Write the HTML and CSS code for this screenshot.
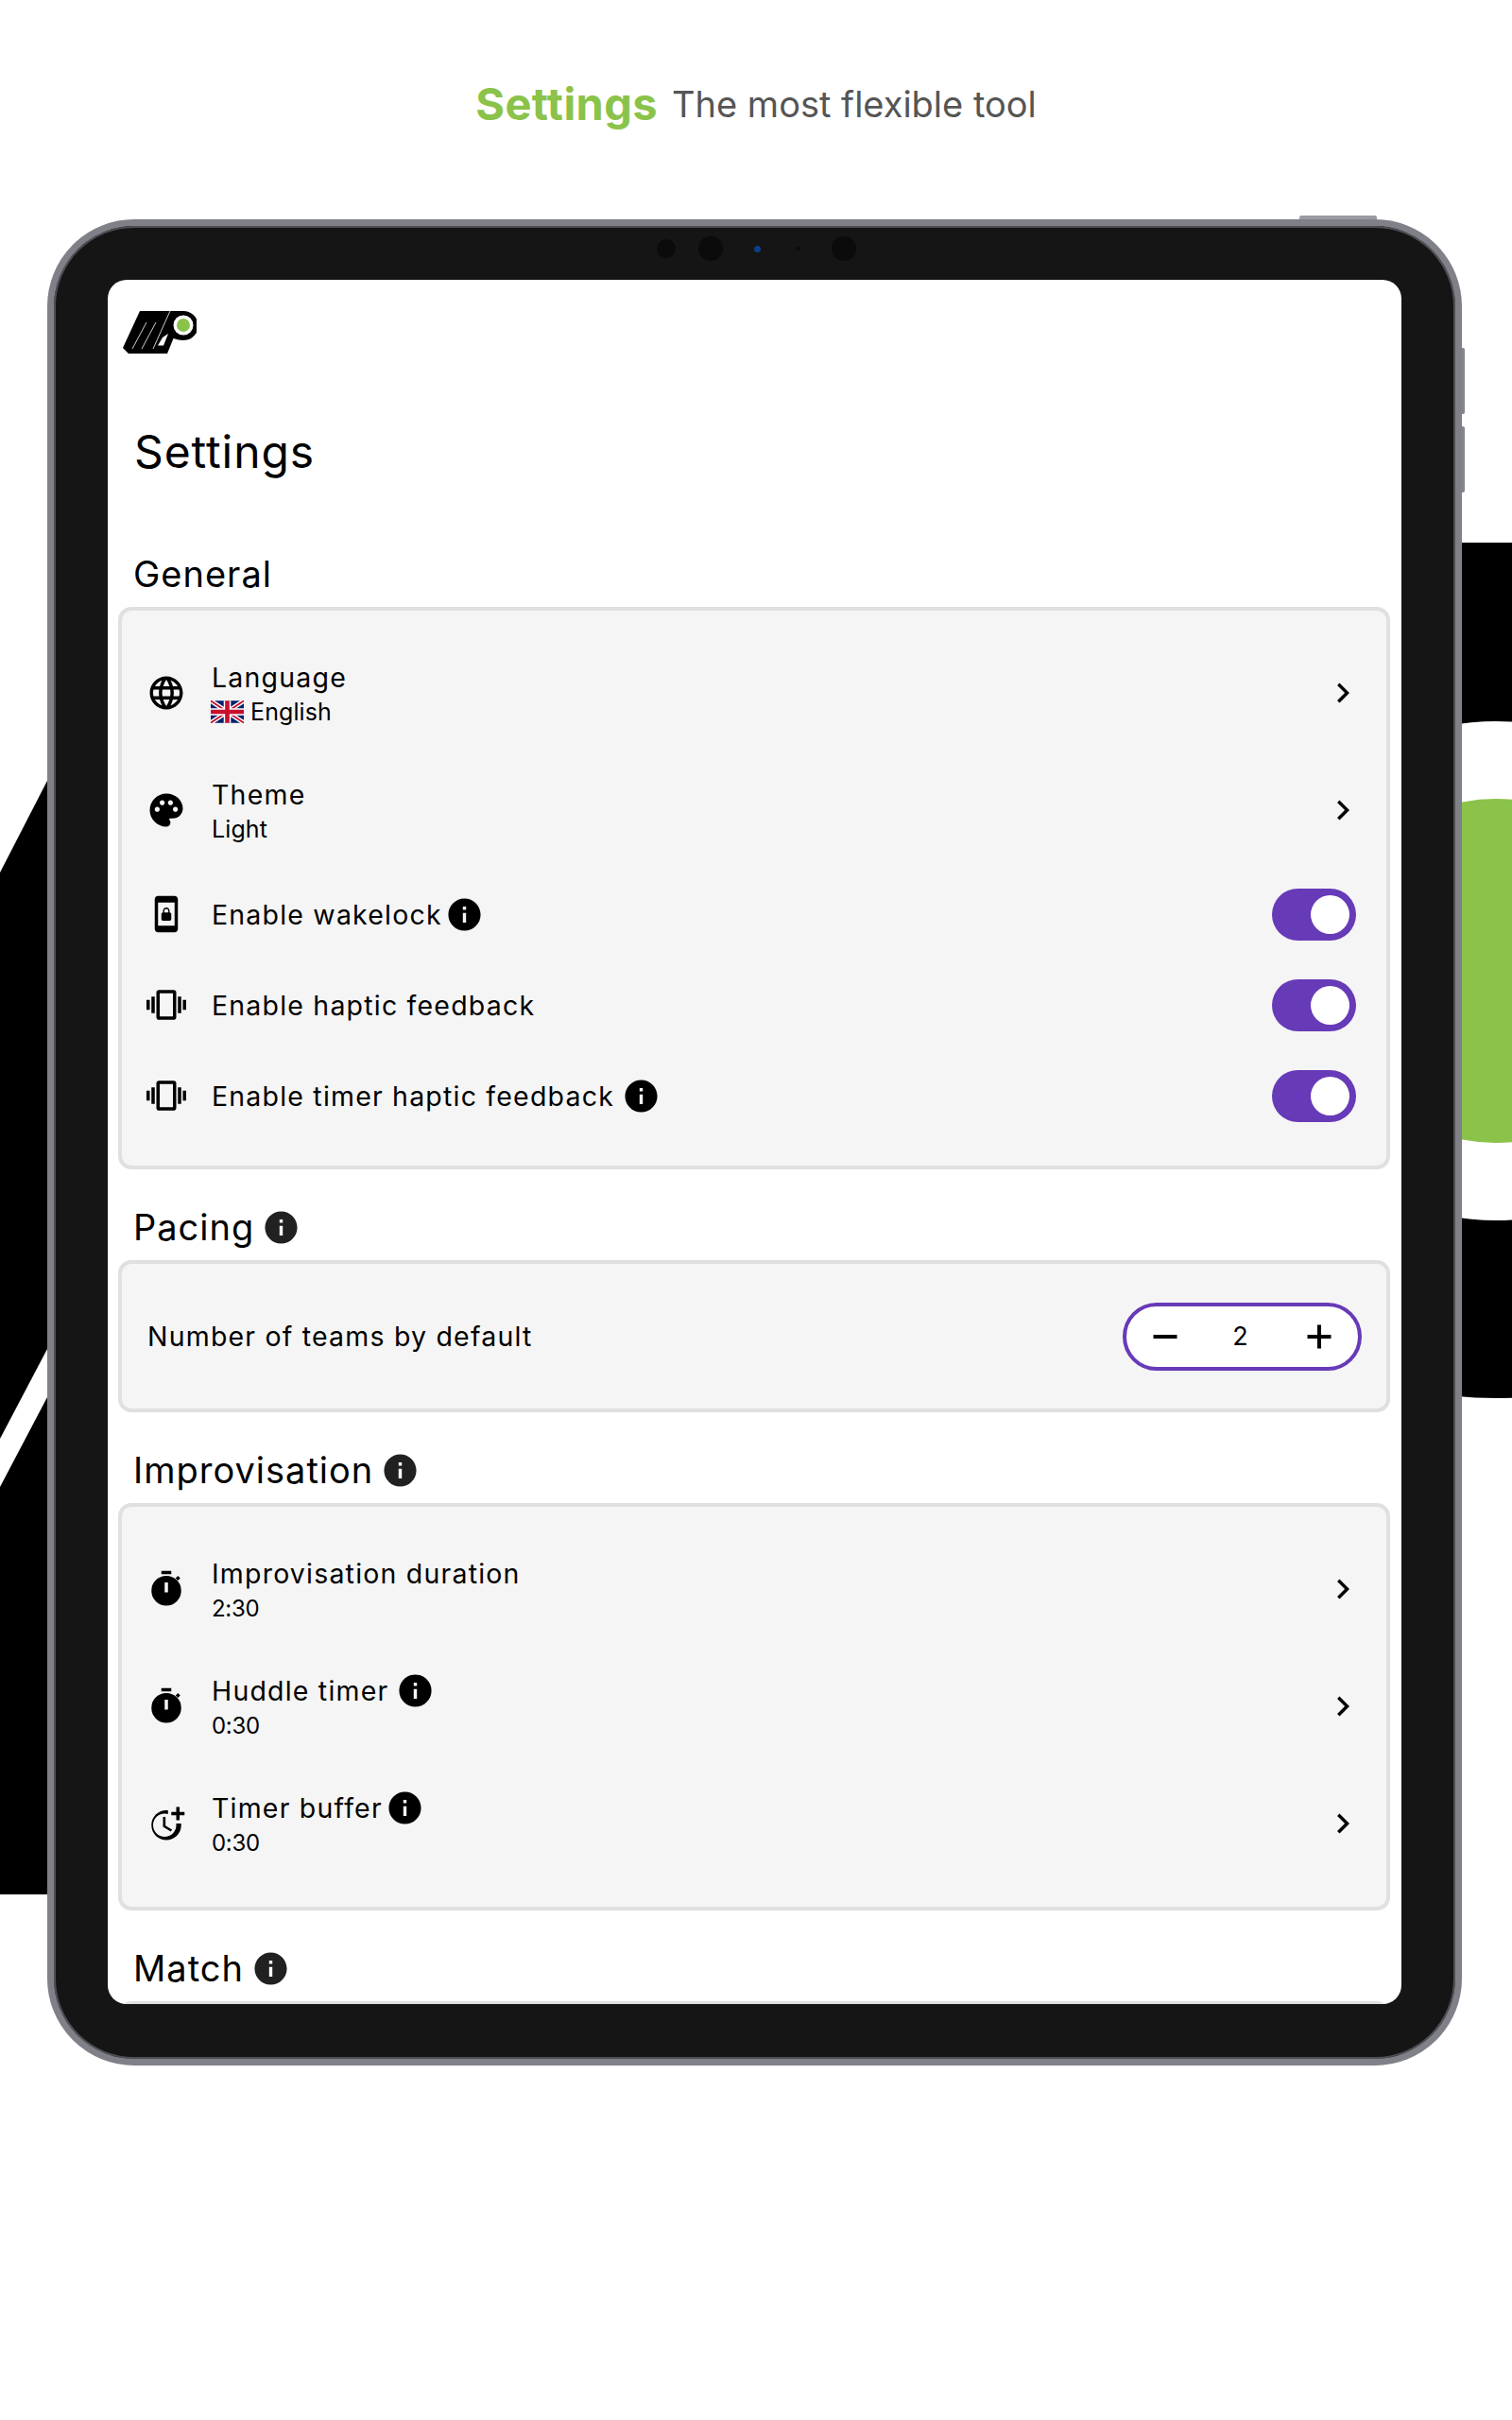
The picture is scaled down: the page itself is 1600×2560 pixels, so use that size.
FILE: index.html
```html
<!DOCTYPE html>
<html lang="en">
<head>
    <meta charset="UTF-8">
    <meta name="viewport" content="width=device-width, initial-scale=1.0">
    <title>Settings</title>
    <link rel="stylesheet" href="styles.css">
</head>
<body>

    <!-- Big logo behind the tablet -->
    <svg class="backdrop" width="1600" height="2560" viewBox="0 0 1600 2560">
        <polygon points="0,923 120,690 120,2004 0,2004" fill="#000"/>
        <polygon points="0,1522 120,1294 120,1345 0,1573" fill="#fff"/>
        <rect x="1500" y="574" width="100" height="453" fill="#000"/>
        <circle cx="1583" cy="1027" r="452" fill="#000"/>
        <circle cx="1583" cy="1027" r="264" fill="#fff"/>
        <circle cx="1583" cy="1027" r="182" fill="#8bc34a"/>
    </svg>

    <svg width="0" height="0" class="defs">
        <defs>
            <symbol id="i-info" viewBox="0 0 24 24"><path d="M12 2C6.48 2 2 6.48 2 12s4.48 10 10 10 10-4.48 10-10S17.52 2 12 2zm1 15h-2v-6h2v6zm0-8h-2V7h2v2z"/></symbol>
            <symbol id="i-chevron" viewBox="0 0 24 24"><path d="M10 6L8.59 7.41 13.17 12l-4.58 4.59L10 18l6-6z"/></symbol>
            <symbol id="i-globe" viewBox="0 0 24 24"><path d="M11.99 2C6.47 2 2 6.48 2 12s4.47 10 9.99 10C17.52 22 22 17.52 22 12S17.52 2 11.99 2zm6.93 6h-2.95c-.32-1.25-.78-2.45-1.38-3.56 1.84.63 3.37 1.91 4.33 3.56zM12 4.04c.83 1.2 1.48 2.53 1.91 3.96h-3.82c.43-1.43 1.08-2.76 1.91-3.96zM4.26 14C4.1 13.36 4 12.69 4 12s.1-1.36.26-2h3.38c-.08.66-.14 1.32-.14 2 0 .68.06 1.34.14 2H4.26zm.82 2h2.95c.32 1.25.78 2.45 1.38 3.56-1.84-.63-3.37-1.9-4.33-3.56zm2.95-8H5.08c.96-1.66 2.49-2.93 4.33-3.56C8.81 5.55 8.35 6.75 8.03 8zM12 19.96c-.83-1.2-1.48-2.53-1.91-3.96h3.82c-.43 1.43-1.08 2.76-1.91 3.96zM14.34 14H9.66c-.09-.66-.16-1.32-.16-2 0-.68.07-1.35.16-2h4.68c.09.65.16 1.32.16 2 0 .68-.07 1.34-.16 2zm.25 5.56c.6-1.11 1.06-2.31 1.38-3.56h2.95c-.96 1.65-2.49 2.93-4.33 3.56zM16.36 14c.08-.66.14-1.32.14-2 0-.68-.06-1.34-.14-2h3.38c.16.64.26 1.31.26 2s-.1 1.36-.26 2h-3.38z"/></symbol>
            <symbol id="i-palette" viewBox="0 0 24 24"><path d="M12 2C6.49 2 2 6.49 2 12s4.49 10 10 10c1.38 0 2.5-1.12 2.5-2.5 0-.61-.23-1.2-.64-1.67-.08-.1-.13-.21-.13-.33 0-.28.22-.5.5-.5H16c3.31 0 6-2.69 6-6 0-4.96-4.49-9-10-9zm5.5 11c-.83 0-1.5-.67-1.5-1.5s.67-1.5 1.5-1.5 1.5.67 1.5 1.5-.67 1.5-1.5 1.5zm-3-4c-.83 0-1.5-.67-1.5-1.5S13.67 6 14.5 6s1.5.67 1.5 1.5S15.33 9 14.5 9zM5 11.5c0-.83.67-1.5 1.5-1.5s1.5.67 1.5 1.5S7.33 13 6.5 13 5 12.33 5 11.5zm6-4c0 .83-.67 1.5-1.5 1.5S8 8.33 8 7.5 8.67 6 9.5 6s1.5.67 1.5 1.5z"/></symbol>
            <symbol id="i-lock" viewBox="0 0 24 24"><path d="M10 16h4c.55 0 1-.45 1-1v-3c0-.55-.45-1-1-1v-1c0-1.11-.9-2-2-2-1.11 0-2 .9-2 2v1c-.55 0-1 .45-1 1v3c0 .55.45 1 1 1zm.8-6c0-.66.54-1.2 1.2-1.2s1.2.54 1.2 1.2v1h-2.4v-1zM17 1H7c-1.1 0-2 .9-2 2v18c0 1.1.9 2 2 2h10c1.1 0 2-.9 2-2V3c0-1.1-.9-2-2-2zm0 18H7V5h10v14z"/></symbol>
            <symbol id="i-vibration" viewBox="0 0 24 24"><path d="M0 15h2V9H0v6zm3 2h2V7H3v10zm19-8v6h2V9h-2zm-3 8h2V7h-2v10zM16.5 3h-9C6.67 3 6 3.67 6 4.5v15c0 .83.67 1.5 1.5 1.5h9c.83 0 1.5-.67 1.5-1.5v-15c0-.83-.67-1.5-1.5-1.5zM16 19H8V5h8v14z"/></symbol>
            <symbol id="i-timer" viewBox="0 0 24 24"><path d="M9 1h6v2H9zM17.6 5.4l1.42-1.42 1.41 1.41-1.42 1.42z"/><path fill-rule="evenodd" d="M12 4a9 9 0 1 0 0 18 9 9 0 0 0 0-18zM11 8h2v6h-2z"/></symbol>
            <symbol id="i-more-time" viewBox="0 0 24 24"><path d="M10 8v6l4.7 2.9.8-1.2-4-2.4V8zM17.92 12c.05.33.08.66.08 1 0 3.9-3.1 7-7 7s-7-3.1-7-7 3.1-7 7-7c.7 0 1.37.1 2 .29V4.23C13.36 4.08 12.69 4 12 4c-5 0-9 4-9 9s4 9 9 9 9-4 9-9c0-.34-.02-.67-.06-1h-3.02zM20 5V2h-2v3h-3v2h3v3h2V7h3V5z"/></symbol>
        </defs>
    </svg>

    <h2 class="headline"><b>Settings</b> <span>The most flexible tool</span></h2>

    <div class="tablet">
        <i class="btn-top"></i>
        <i class="btn-side btn-side-1"></i>
        <i class="btn-side btn-side-2"></i>

        <div class="cameras">
            <i class="cam cam-a"></i>
            <i class="cam cam-b"></i>
            <i class="cam cam-blue"></i>
            <i class="cam cam-dot"></i>
            <i class="cam cam-c"></i>
        </div>

        <div class="screen">
            <svg class="logo" width="78" height="46" viewBox="10 8 78 46">
                <path d="M28 8H74a15.5 15.5 0 0 1 4 30.5c-4 1-9 .5-14.5-1.5L57 53H16l-6-6z" fill="#000"/>
                <circle cx="74" cy="23" r="10.5" fill="#fff"/>
                <circle cx="74" cy="23" r="7" fill="#8bc34a"/>
                <path d="M35 20L20 48M45 20L30 48M60 8L42 48" stroke="#fff" stroke-width=".8" fill="none"/>
                <path d="M58 32L53 44.5 47 44.5 52 36z" fill="#fff"/>
            </svg>

            <h1 class="page-title">Settings</h1>

            <h3 class="section-title section-first">General</h3>
            <div class="card">
                <div class="row row-double">
                    <svg class="row-icon"><use href="#i-globe"/></svg>
                    <div class="row-text">
                        <div class="row-title">Language</div>
                        <div class="row-sub">
                            <svg class="flag" width="35" height="24" viewBox="0 0 60 40">
                                <rect width="60" height="40" rx="4" fill="#012169"/>
                                <path d="M0 0L60 40M60 0L0 40" stroke="#fff" stroke-width="8"/>
                                <path d="M0 0L60 40M60 0L0 40" stroke="#c8102e" stroke-width="3"/>
                                <path d="M30 0V40M0 20H60" stroke="#fff" stroke-width="13"/>
                                <path d="M30 0V40M0 20H60" stroke="#c8102e" stroke-width="8"/>
                            </svg>
                            English
                        </div>
                    </div>
                    <svg class="chevron"><use href="#i-chevron"/></svg>
                </div>
                <div class="row row-double">
                    <svg class="row-icon"><use href="#i-palette"/></svg>
                    <div class="row-text">
                        <div class="row-title">Theme</div>
                        <div class="row-sub">Light</div>
                    </div>
                    <svg class="chevron"><use href="#i-chevron"/></svg>
                </div>
                <div class="row">
                    <svg class="row-icon"><use href="#i-lock"/></svg>
                    <div class="row-text">
                        <div class="row-title">Enable wakelock <svg class="info info-tight"><use href="#i-info"/></svg></div>
                    </div>
                    <div class="toggle"><i class="knob"></i></div>
                </div>
                <div class="row">
                    <svg class="row-icon"><use href="#i-vibration"/></svg>
                    <div class="row-text">
                        <div class="row-title">Enable haptic feedback</div>
                    </div>
                    <div class="toggle"><i class="knob"></i></div>
                </div>
                <div class="row">
                    <svg class="row-icon"><use href="#i-vibration"/></svg>
                    <div class="row-text">
                        <div class="row-title">Enable timer haptic feedback <svg class="info"><use href="#i-info"/></svg></div>
                    </div>
                    <div class="toggle"><i class="knob"></i></div>
                </div>
            </div>

            <h3 class="section-title">Pacing <svg class="info info-head"><use href="#i-info"/></svg></h3>
            <div class="card card-stepper">
                <div class="row-title">Number of teams by default</div>
                <div class="stepper">
                    <svg width="36" height="36" viewBox="0 0 36 36"><path d="M5.5 18h25" stroke="#000" stroke-width="4"/></svg>
                    <span class="stepper-value">2</span>
                    <svg width="36" height="36" viewBox="0 0 36 36"><path d="M5.5 18h25M18 5.5v25" stroke="#000" stroke-width="4"/></svg>
                </div>
            </div>

            <h3 class="section-title">Improvisation <svg class="info info-head"><use href="#i-info"/></svg></h3>
            <div class="card">
                <div class="row row-double">
                    <svg class="row-icon"><use href="#i-timer"/></svg>
                    <div class="row-text">
                        <div class="row-title">Improvisation duration</div>
                        <div class="row-sub row-sub-time">2:30</div>
                    </div>
                    <svg class="chevron"><use href="#i-chevron"/></svg>
                </div>
                <div class="row row-double">
                    <svg class="row-icon"><use href="#i-timer"/></svg>
                    <div class="row-text">
                        <div class="row-title">Huddle timer <svg class="info"><use href="#i-info"/></svg></div>
                        <div class="row-sub row-sub-time">0:30</div>
                    </div>
                    <svg class="chevron"><use href="#i-chevron"/></svg>
                </div>
                <div class="row row-double">
                    <svg class="row-icon"><use href="#i-more-time"/></svg>
                    <div class="row-text">
                        <div class="row-title">Timer buffer <svg class="info info-tight"><use href="#i-info"/></svg></div>
                        <div class="row-sub row-sub-time">0:30</div>
                    </div>
                    <svg class="chevron"><use href="#i-chevron"/></svg>
                </div>
            </div>

            <h3 class="section-title">Match <svg class="info info-head"><use href="#i-info"/></svg></h3>
            <div class="card card-cut"></div>
        </div>
    </div>

</body>
</html>
```

FILE: styles.css
```css
* {
    box-sizing: border-box;
}

body {
    margin: 0;
    height: 2560px;
    position: relative;
    overflow: hidden;
    background-color: #ffffff;
    color: #000000;
    font-family: Inter, "Noto Sans", sans-serif;
}

.backdrop {
    position: absolute;
    top: 0;
    left: 0;
}

.defs {
    position: absolute;
}

/* Heading above the tablet */
.headline {
    position: relative;
    display: flex;
    justify-content: center;
    align-items: center;
    gap: 15px;
    height: 60px;
    margin: 80px 0 92px;
    line-height: 60px;
    font-weight: 400;
}

.headline b {
    font-size: 47px;
    letter-spacing: 0.4px;
    font-weight: 700;
    color: #8bc34a;
}

.headline span {
    font-size: 38px;
    color: #555555;
}

/* Tablet frame */
.tablet {
    position: relative;
    width: 1497px;
    margin-left: 50px;
    padding: 57px 57px 58px;
    background-color: #151515;
    border: 7px solid #808188;
    border-radius: 92px;
    box-shadow: inset 0 0 0 2px #4e4f54;
}

.btn-top {
    position: absolute;
    top: -11px;
    right: 83px;
    width: 82px;
    height: 4px;
    background-color: #9a9ba2;
    border-radius: 2px 2px 0 0;
}

.btn-side {
    position: absolute;
    right: -10px;
    width: 3px;
    height: 70px;
    background-color: #85868d;
    border-radius: 0 2px 2px 0;
}

.btn-side-1 {
    top: 129px;
}

.btn-side-2 {
    top: 212px;
}

.cameras {
    position: absolute;
    top: 0;
    left: 0;
    right: 0;
    height: 48px;
}

.cam {
    position: absolute;
    border-radius: 50%;
    background-color: #0b0b0b;
}

.cam-a {
    left: 638px;
    top: 14px;
    width: 20px;
    height: 20px;
}

.cam-b {
    left: 682px;
    top: 11px;
    width: 26px;
    height: 26px;
}

.cam-blue {
    left: 741px;
    top: 21px;
    width: 7px;
    height: 7px;
    background-color: #0d3f86;
}

.cam-dot {
    left: 786px;
    top: 22px;
    width: 4px;
    height: 4px;
}

.cam-c {
    left: 823px;
    top: 11px;
    width: 26px;
    height: 26px;
}

.screen {
    width: 1369px;
    height: 1824px;
    padding: 33px 12px 0 11px;
    background-color: #ffffff;
    border-radius: 20px;
    overflow: hidden;
}

.logo {
    display: block;
    margin-left: 5px;
}

.page-title {
    margin: 73px 0 0;
    padding-left: 17px;
    height: 60px;
    font-size: 48px;
    letter-spacing: 0.9px;
    line-height: 60px;
    font-weight: 400;
}

.section-title {
    display: flex;
    align-items: center;
    margin: 41px 0 15px;
    padding-left: 16px;
    height: 40px;
    font-size: 38px;
    letter-spacing: 1px;
    line-height: 43px;
    font-weight: 400;
}

.section-first {
    margin-top: 79px;
}

/* Cards and rows */
.card {
    border: 4px solid #e0e0e0;
    border-radius: 14px;
    background-color: #f5f5f5;
    padding: 25px 25px 26px 26px;
}

.card-stepper {
    display: flex;
    justify-content: space-between;
    align-items: center;
    height: 161px;
    padding: 0 26px 0 27px;
}

.card-cut {
    height: 40px;
}

.row {
    display: flex;
    align-items: center;
    height: 96px;
}

.row-double {
    height: 124px;
}

.row-icon {
    width: 42px;
    height: 42px;
    flex-shrink: 0;
    margin-right: 27px;
}

.row-text {
    flex: 1;
}

.row-double .row-text {
    margin-top: 3px;
}

.row-title {
    display: flex;
    align-items: center;
    gap: 8px;
    height: 37px;
    font-size: 28.5px;
    letter-spacing: 1.2px;
}

.row-sub {
    display: flex;
    align-items: center;
    gap: 7px;
    height: 37px;
    font-size: 25px;
    letter-spacing: 0.1px;
}

.row-sub-time {
    font-size: 24px;
    letter-spacing: -0.3px;
}

.flag {
    margin-left: -1px;
}

.chevron {
    width: 42px;
    height: 42px;
    flex-shrink: 0;
}

.info {
    width: 41px;
    height: 41px;
    margin: -2px 0;
    flex-shrink: 0;
}

.info-tight {
    margin-left: -5px;
}

.info-head {
    fill: #212121;
    margin-left: 8px;
}

.toggle {
    display: flex;
    justify-content: flex-end;
    align-items: center;
    width: 89px;
    height: 55px;
    padding-right: 7px;
    margin-right: 7px;
    background-color: #673ab7;
    border-radius: 28px;
}

.knob {
    width: 41px;
    height: 41px;
    background-color: #ffffff;
    border-radius: 50%;
}

.stepper {
    display: flex;
    justify-content: space-between;
    align-items: center;
    width: 253px;
    height: 72px;
    padding: 0 23px;
    background-color: #ffffff;
    border: 4px solid #673ab7;
    border-radius: 36px;
}

.stepper-value {
    font-size: 27px;
    margin-right: 4px;
}
```
